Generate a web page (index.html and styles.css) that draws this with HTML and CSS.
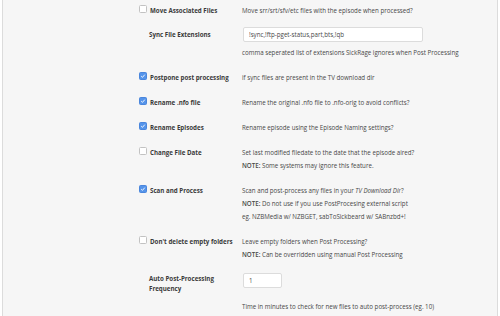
FILE: index.html
```html
<!DOCTYPE html>
<html lang="en">
<head>
  <meta charset="UTF-8" />
  <link rel="stylesheet" href="styles.css">
</head>
<body>
  <div class="panel">
    <div class="field first">
      <div class="field-row">
        <label class="title"><span class="check"></span>Move Associated Files</label>
        <div class="desc">Move srr/srt/sfv/etc files with the episode when processed?</div>
      </div>
    </div>

    <div class="field">
      <div class="field-row center">
        <label class="title plain">Sync File Extensions</label>
        <div class="desc"><input class="text-input wide" type="text" value="!sync,!ftp-pget-status,part,bts,!qb"></div>
      </div>
      <div class="note-row">comma seperated list of extensions SickRage ignores when Post Processing</div>
    </div>

    <div class="field">
      <div class="field-row">
        <label class="title"><span class="check on"></span>Postpone post processing</label>
        <div class="desc">if sync files are present in the TV download dir</div>
      </div>
    </div>

    <div class="field">
      <div class="field-row">
        <label class="title"><span class="check on"></span>Rename .nfo file</label>
        <div class="desc">Rename the original .nfo file to .nfo-orig to avoid conflicts?</div>
      </div>
    </div>

    <div class="field">
      <div class="field-row">
        <label class="title"><span class="check on"></span>Rename Episodes</label>
        <div class="desc">Rename episode using the Episode Naming settings?</div>
      </div>
    </div>

    <div class="field">
      <div class="field-row">
        <label class="title"><span class="check"></span>Change File Date</label>
        <div class="desc">
          Set last modified filedate to the date that the episode aired?<br>
          <b>NOTE:</b> Some systems may ignore this feature.
        </div>
      </div>
    </div>

    <div class="field">
      <div class="field-row">
        <label class="title"><span class="check on"></span>Scan and Process</label>
        <div class="desc">
          Scan and post-process any files in your <i>TV Download Dir</i>?<br>
          <b>NOTE:</b> Do not use if you use PostProcesing external script<br>
          eg. NZBMedia w/ NZBGET, sabToSickbeard w/ SABnzbd+!
        </div>
      </div>
    </div>

    <div class="field">
      <div class="field-row">
        <label class="title"><span class="check"></span>Don't delete empty folders</label>
        <div class="desc">
          Leave empty folders when Post Processing?<br>
          <b>NOTE:</b> Can be overridden using manual Post Processing
        </div>
      </div>
    </div>

    <div class="field last">
      <div class="field-row">
        <label class="title plain two-line">Auto Post-Processing<br>Frequency</label>
        <div class="desc"><input class="text-input narrow" type="text" value="1"></div>
      </div>
      <div class="note-row">Time in minutes to check for new files to auto post-process (eg. 10)</div>
    </div>
  </div>
</body>
</html>
```

FILE: styles.css
```css
body {
  margin: 0;
  background-color: #fff;
  font-family: 'Open Sans', sans-serif;
  font-size: 6.2px;
  line-height: 13px;
  color: #3a3a3a;
}

.panel {
  margin: 0 2px;
  height: 316px;
  box-sizing: border-box;
  background-color: #f6f6f6;
  border-left: 1px solid #dcdcdc;
  border-right: 1px solid #dcdcdc;
  padding: 3.5px 0 0 136px;
  overflow: hidden;
}

.field {
  margin-bottom: 12px;
}

.field.first {
  margin-bottom: 10.5px;
}

.field-row {
  display: flex;
  align-items: flex-start;
}

.field-row.center {
  align-items: center;
}

.title {
  width: 103px;
  flex-shrink: 0;
  display: flex;
  align-items: center;
  font-weight: bold;
  color: #3a3a3a;
}

.title.plain {
  padding-left: 10px;
  box-sizing: border-box;
}

.title.two-line {
  display: block;
  line-height: 10px;
  padding-top: 1.5px;
}

.desc {
  color: #474747;
}

.desc b {
  font-weight: 600;
}

.check {
  width: 6px;
  height: 6px;
  margin-right: 3px;
  border: 1px solid #c2c2c2;
  border-radius: 1.5px;
  background-color: #fff;
  position: relative;
  top: -1px;
}

.check.on {
  border-color: #4a86dc;
  background-color: #5594ea;
  background-image: url("data:image/svg+xml;utf8,<svg xmlns='http://www.w3.org/2000/svg' viewBox='0 0 8 8'><path d='M1.6 4.2 L3.3 5.8 L6.4 2.2' fill='none' stroke='white' stroke-width='1.2'/></svg>");
  background-size: 100% 100%;
}

.text-input {
  display: block;
  height: 15px;
  box-sizing: border-box;
  margin: 0 0 0 1px;
  padding: 0 5px;
  border: 1px solid #dcdcdc;
  border-radius: 2px;
  background-color: #fff;
  font-family: 'Open Sans', sans-serif;
  font-size: 6.2px;
  color: #474747;
  outline: none;
}

.text-input.wide {
  width: 180px;
}

.text-input.narrow {
  width: 39px;
}

.note-row {
  margin-top: 3.5px;
  padding-left: 103px;
  color: #474747;
}

.field.last .note-row {
  margin-top: 6px;
}
```
